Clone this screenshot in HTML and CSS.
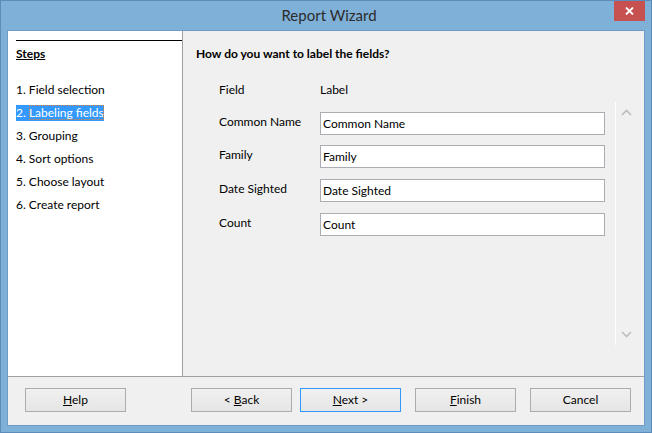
FILE: index.html
```html
<!DOCTYPE html>
<html>
<head>
<meta charset="utf-8">
<title>Report Wizard</title>
<link rel="stylesheet" href="styles.css">
</head>
<body>
<div class="window">
  <div class="titlebar">
    <span></span>
    <span class="title">Report Wizard</span>
    <span class="close-wrap">
      <span class="close">
        <svg width="9" height="8" viewBox="0 0 9 8"><path d="M1 0.5 L8 7.5 M8 0.5 L1 7.5" stroke="#fff" stroke-width="1.8" fill="none"/></svg>
      </span>
    </span>
  </div>
  <div class="client">
    <div class="main">
      <div class="steps">
        <div class="steps-rule"></div>
        <div class="steps-title">Steps</div>
        <ul class="step-list">
          <li>1. Field selection</li>
          <li><span class="current">2. <span class="focus">Labeling fields</span></span></li>
          <li>3. Grouping</li>
          <li>4. Sort options</li>
          <li>5. Choose layout</li>
          <li>6. Create report</li>
        </ul>
      </div>
      <div class="content">
        <div class="heading">How do you want to label the fields?</div>
        <div class="body">
          <div class="fields">
            <div class="field-head"><span class="fname">Field</span><span>Label</span></div>
            <div class="row first"><span class="fname">Common Name</span><div class="input">Common Name</div></div>
            <div class="row"><span class="fname">Family</span><div class="input">Family</div></div>
            <div class="row"><span class="fname">Date Sighted</span><div class="input">Date Sighted</div></div>
            <div class="row"><span class="fname">Count</span><div class="input">Count</div></div>
          </div>
          <div class="scroll">
            <svg width="11" height="7" viewBox="0 0 11 7"><path d="M1 6 L5.5 1.5 L10 6" stroke="#bdbdbd" stroke-width="1.6" fill="none"/></svg>
            <svg width="11" height="7" viewBox="0 0 11 7"><path d="M1 1 L5.5 5.5 L10 1" stroke="#bdbdbd" stroke-width="1.6" fill="none"/></svg>
          </div>
        </div>
      </div>
    </div>
    <div class="buttons">
      <button class="btn"><u>H</u>elp</button>
      <span class="spacer"></span>
      <button class="btn">&lt; <u>B</u>ack</button>
      <button class="btn default"><u>N</u>ext &gt;</button>
      <button class="btn wide-gap"><u>F</u>inish</button>
      <button class="btn wide-gap">Cancel</button>
    </div>
  </div>
</div>
</body>
</html>
```

FILE: styles.css
```css
* { box-sizing: border-box; }
html, body { margin: 0; padding: 0; }
body {
  font-family: "Lato", "Liberation Sans", sans-serif;
  font-size: 12px;
  color: #000;
  background: #7fb0d8;
}
.window {
  width: 652px;
  height: 433px;
  background: #7fb0d8;
  border: 1px solid #5b8cba;
  padding: 0 6px 6px 6px;
  display: flex;
  flex-direction: column;
}
.titlebar {
  height: 29px;
  display: grid;
  grid-template-columns: 1fr auto 1fr;
  align-items: start;
  margin-right: -6px;
}
.title {
  font-size: 15px;
  line-height: 28px;
  color: #2b2b2b;
}
.close-wrap {
  display: flex;
  justify-content: flex-end;
  padding-right: 6px;
}
.close {
  width: 31px;
  height: 20px;
  background: #c75050;
  display: flex;
  align-items: center;
  justify-content: center;
}
.client {
  flex: 1;
  border: 1px solid #6f9cc6;
  background: #f0f0f0;
  display: flex;
  flex-direction: column;
}
.main {
  height: 345px;
  display: flex;
}
.steps {
  width: 175px;
  background: #fff;
  border-right: 1px solid #a0a0a0;
  padding: 9px 0 0 8px;
}
.steps-rule {
  height: 1px;
  background: #000;
}
.steps-title {
  margin-top: 5px;
  line-height: 16px;
  font-weight: bold;
  text-decoration: underline;
}
.step-list {
  list-style: none;
  margin: 20px 0 0;
  padding: 0;
}
.step-list li {
  line-height: 16px;
  height: 16px;
  margin-bottom: 7px;
}
.current {
  display: inline-block;
  background: #3399ff;
  color: #fff;
  height: 16px;
}
.focus {
  outline: 1px dotted #e0803a;
  outline-offset: -1px;
}
.content {
  flex: 1;
  padding: 15px 0 0 13px;
}
.heading {
  font-weight: bold;
  line-height: 16px;
}
.body {
  display: flex;
  align-items: flex-start;
  margin-top: 20px;
  padding-left: 23px;
}
.fields {
  width: 386px;
}
.field-head {
  display: flex;
  line-height: 16px;
  margin-bottom: 14px;
}
.fname {
  width: 101px;
  flex: none;
}
.row {
  display: flex;
  height: 23px;
  margin-bottom: 11px;
}
.row.first {
  margin-bottom: 10px;
}
.row .fname {
  line-height: 16px;
  padding-top: 2px;
}
.input {
  width: 285px;
  height: 23px;
  background: #fff;
  border: 1px solid #abadb3;
  padding: 0 2px;
  line-height: 21px;
}
.scroll {
  margin: 20px 0 0 10px;
  width: 21px;
  height: 243px;
  border-left: 1px solid #fff;
  display: flex;
  flex-direction: column;
  justify-content: space-between;
  align-items: center;
  padding: 7px 0 7px 1px;
}
.buttons {
  flex: 1;
  border-top: 1px solid #a0a0a0;
  display: flex;
  align-items: flex-start;
  padding: 11px 13px 0 17px;
}
.spacer { flex: 1; }
.btn {
  width: 101px;
  height: 24px;
  font-family: inherit;
  font-size: 12px;
  color: #000;
  border: 1px solid #acacac;
  background: linear-gradient(#f0f0f0, #e5e5e5);
  padding: 0;
  margin: 0;
  line-height: 22px;
}
.btn u { text-decoration: underline; }
.default {
  margin-left: 8px;
  border-color: #3399ff;
}
.wide-gap { margin-left: 14px; }
```
